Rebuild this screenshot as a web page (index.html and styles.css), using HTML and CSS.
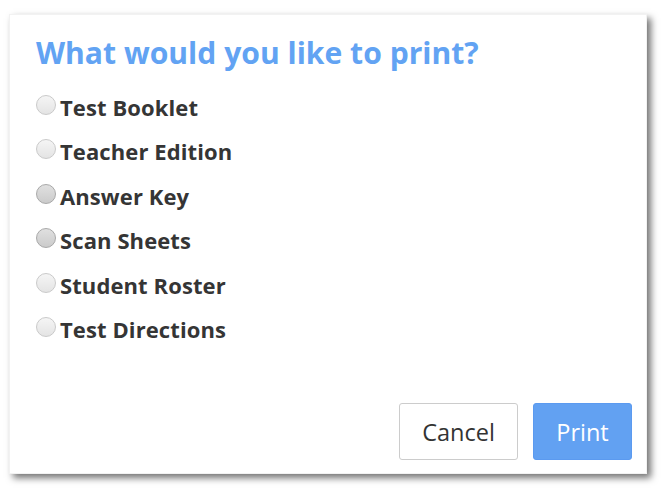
FILE: index.html
```html
<!DOCTYPE html>
<html>
<head>
<meta charset="utf-8">
<link rel="stylesheet" href="styles.css">
</head>
<body>
<div class="dialog">
  <h1 class="title">What would you like to print?</h1>
  <ul class="options">
    <li class="option"><span class="radio"></span><span class="label">Test Booklet</span></li>
    <li class="option"><span class="radio"></span><span class="label">Teacher Edition</span></li>
    <li class="option"><span class="radio dark"></span><span class="label">Answer Key</span></li>
    <li class="option"><span class="radio dark"></span><span class="label">Scan Sheets</span></li>
    <li class="option"><span class="radio"></span><span class="label">Student Roster</span></li>
    <li class="option"><span class="radio"></span><span class="label">Test Directions</span></li>
  </ul>
  <div class="actions">
    <button class="btn btn-cancel">Cancel</button>
    <button class="btn btn-print">Print</button>
  </div>
</div>
</body>
</html>
```
FILE: styles.css
```css
html, body {
  margin: 0;
  padding: 0;
  background: #ffffff;
}
body {
  width: 670px;
  height: 494px;
  overflow: hidden;
  font-family: "Open Sans", "Liberation Sans", sans-serif;
}
.dialog {
  box-sizing: border-box;
  margin: 14px 0 0 9px;
  width: 638px;
  height: 460px;
  background: #fff;
  border: 1px solid #f2f2f2;
  box-shadow: 4px 4px 7px rgba(0,0,0,0.55);
  padding: 18px 14px 13px 26px;
  display: flex;
  flex-direction: column;
}
.title {
  margin: 0;
  font-family: "Open Sans", sans-serif;
  font-weight: 700;
  font-size: 30.1px;
  line-height: 40px;
  color: #62a3f3;
}
.options {
  list-style: none;
  margin: 20px 0 0 0;
  padding: 0;
  display: flex;
  flex-direction: column;
  gap: 16.4px;
}
.option {
  display: flex;
  align-items: center;
  height: 28px;
}
.radio {
  flex: none;
  width: 20px;
  height: 20px;
  border-radius: 50%;
  box-sizing: border-box;
  border: 1px solid #cacaca;
  background: linear-gradient(#f5f5f5, #e4e4e4);
  margin-right: 4px;
  position: relative;
  top: -2px;
}
.radio.dark {
  border-color: #a8a8a8;
  background: linear-gradient(#e0e0e0, #cbcbcb);
}
.label {
  font-size: 22px;
  font-weight: 700;
  color: #353535;
  letter-spacing: 0.1px;
}
.actions {
  margin-top: auto;
  display: flex;
  justify-content: flex-end;
  gap: 15px;
}
.btn {
  font-family: "Open Sans", sans-serif;
  font-size: 23.5px;
  height: 57px;
  border-radius: 3px;
  padding: 0;
}
.btn-cancel {
  width: 119px;
  background: #fff;
  border: 1px solid #cccccc;
  color: #333;
}
.btn-print {
  width: 99px;
  background: #62a1f2;
  border: 1px solid #5b9af0;
  color: #fff;
}
```
